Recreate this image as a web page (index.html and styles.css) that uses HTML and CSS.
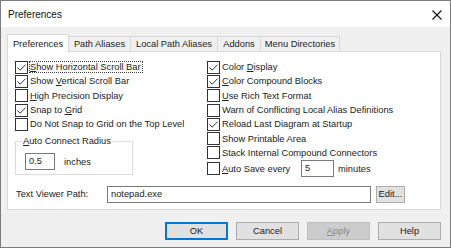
FILE: index.html
```html
<!DOCTYPE html>
<html lang="en">
<head>
    <meta charset="UTF-8">
    <title>Preferences</title>
    <link rel="stylesheet" href="styles.css">
</head>
<body>
    <div class="dialog">
        <div class="titlebar">
            <span class="title">Preferences</span>
            <svg class="close" width="10" height="10" viewBox="0 0 10 10">
                <path d="M0.5 0.5 L9.5 9.5 M9.5 0.5 L0.5 9.5" stroke="#111" stroke-width="1.1" fill="none"/>
            </svg>
        </div>

        <div class="content">
            <div class="tabs">
                <div class="tab active tab-prefs">Preferences</div>
                <div class="tab tab-path">Path Aliases</div>
                <div class="tab tab-local">Local Path Aliases</div>
                <div class="tab tab-addons">Addons</div>
                <div class="tab tab-menu">Menu Directories</div>
            </div>

            <div class="panel">
                <div class="columns">
                    <div class="col col-left">
                        <div class="row"><span class="box checked"></span><span class="focus"><u>S</u>how Horizontal Scroll Bar</span></div>
                        <div class="row"><span class="box checked"></span><span>Show <u>V</u>ertical Scroll Bar</span></div>
                        <div class="row"><span class="box"></span><span><u>H</u>igh Precision Display</span></div>
                        <div class="row"><span class="box checked"></span><span>Snap to <u>G</u>rid</span></div>
                        <div class="row"><span class="box"></span><span>Do Not Snap to Grid on the Top Level</span></div>

                        <fieldset class="group">
                            <legend><u>A</u>uto Connect Radius</legend>
                            <div class="group-row">
                                <span class="field field-radius">0.5</span>
                                <span class="unit">inches</span>
                            </div>
                        </fieldset>
                    </div>

                    <div class="col col-right">
                        <div class="row"><span class="box checked"></span><span>Color <u>D</u>isplay</span></div>
                        <div class="row"><span class="box checked"></span><span><u>C</u>olor Compound Blocks</span></div>
                        <div class="row"><span class="box"></span><span><u>U</u>se Rich Text Format</span></div>
                        <div class="row"><span class="box"></span><span>Warn of Conflicting Local Alias Definitions</span></div>
                        <div class="row"><span class="box checked"></span><span>Reload Last Diagram at Startup</span></div>
                        <div class="row"><span class="box"></span><span>Show Printable Area</span></div>
                        <div class="row"><span class="box"></span><span>Stack Internal Compound Connectors</span></div>
                        <div class="row row-autosave">
                            <span class="box"></span>
                            <span class="autosave-label"><u>A</u>uto Save every</span>
                            <span class="field field-minutes">5</span>
                            <span class="unit-min">minutes</span>
                        </div>
                    </div>
                </div>

                <div class="path-row">
                    <span class="path-label">Text Viewer Path:</span>
                    <span class="field field-path">notepad.exe</span>
                    <span class="btn btn-edit">Edit...</span>
                </div>
            </div>

            <div class="buttons">
                <span class="btn btn-main btn-default">OK</span>
                <span class="btn btn-main">Cancel</span>
                <span class="btn btn-main btn-disabled"><u>A</u>pply</span>
                <span class="btn btn-main">Help</span>
            </div>
        </div>
    </div>
</body>
</html>
```

FILE: styles.css
```css
* {
    box-sizing: border-box;
}

body {
    margin: 0;
    font-family: "Liberation Sans", Arial, sans-serif;
    font-size: 9.3px;
    color: #222;
    background: #f0f0f0;
}

u {
    text-decoration-thickness: 1px;
    text-underline-offset: 1px;
}

.dialog {
    width: 451px;
    height: 248px;
    border: 1px solid #7c7c7c;
    background: #f0f0f0;
    display: flex;
    flex-direction: column;
}

.titlebar {
    height: 26px;
    background: #fff;
    display: flex;
    align-items: center;
    justify-content: space-between;
    padding: 1px 8px 0 7px;
}

.title {
    font-size: 10px;
    color: #111;
}

.close {
    display: block;
    margin-top: 1px;
}

.content {
    padding: 7px 9px 0 6px;
}

/* tabs */

.tabs {
    display: flex;
    align-items: flex-end;
    height: 17px;
}

.tab {
    height: 15px;
    border: 1px solid #d9d9d9;
    border-bottom: none;
    background: #f0f0f0;
    text-align: center;
    line-height: 14px;
    margin-left: -1px;
    white-space: nowrap;
}

.tab.active {
    height: 18px;
    margin-left: 0;
    margin-bottom: -1px;
    background: #fff;
    line-height: 18px;
    position: relative;
    z-index: 1;
}

.tab-prefs { width: 62px; }
.tab-path { width: 63px; }
.tab-local { width: 88px; }
.tab-addons { width: 44px; }
.tab-menu { width: 80px; }

/* panel */

.panel {
    width: 434px;
    height: 159px;
    background: #fff;
    border: 1px solid #d9d9d9;
    padding: 8px 7px 0 7px;
}

.columns {
    display: flex;
}

.col-left {
    width: 192px;
}

.row {
    height: 14.3px;
    display: flex;
    align-items: center;
    white-space: nowrap;
}

.box {
    width: 13px;
    height: 13px;
    border: 1px solid #333;
    background: #fff;
    margin-right: 2px;
    flex: none;
}

.box.checked {
    background: #fff url("data:image/svg+xml;utf8,<svg xmlns='http://www.w3.org/2000/svg' width='11' height='11'><path d='M1.5 5.5 L4.2 8.2 L9.6 2.6' stroke='%23333' stroke-width='1' fill='none'/></svg>") no-repeat center;
}

.focus {
    outline: 1px dotted #444;
    outline-offset: 0;
    padding: 0 1px 0 0;
}

.group {
    width: 118px;
    margin: 5px 0 0 0;
    padding: 0 3px 4px 9px;
    border: 1px solid #dcdcdc;
}

.group legend {
    padding: 0 1px;
    margin-left: -3px;
    line-height: 11px;
}

.group-row {
    display: flex;
    align-items: center;
    margin-top: 6px;
}

.field {
    height: 17px;
    border: 1px solid #7a7a7a;
    background: #fff;
    padding-left: 3px;
    line-height: 15px;
    display: inline-block;
}

.field-radius {
    width: 30px;
}

.unit {
    margin-left: 9px;
}

.row-autosave {
    height: 17px;
}

.autosave-label {
    width: 79px;
}

.field-minutes {
    width: 33px;
}

.unit-min {
    margin-left: 4px;
}

.path-row {
    display: flex;
    align-items: center;
    height: 18px;
    margin-top: 8px;
    padding-left: 1px;
}

.path-label {
    width: 91px;
}

.field-path {
    width: 264px;
}

/* buttons */

.btn {
    display: inline-flex;
    align-items: center;
    justify-content: center;
    background: #e1e1e1;
    border: 1px solid #adadad;
    color: #222;
}

.btn-edit {
    width: 29px;
    height: 17px;
    margin-left: 5px;
}

.buttons {
    display: flex;
    justify-content: flex-end;
    gap: 8px;
    margin-top: 12px;
}

.btn-main {
    width: 63px;
    height: 18px;
}

.btn-default {
    border-color: #0078d7;
    box-shadow: inset 0 0 0 1px #0078d7;
}

.btn-disabled {
    background: #cccccc;
    border-color: #bfbfbf;
    color: #8a8a8a;
}
```
